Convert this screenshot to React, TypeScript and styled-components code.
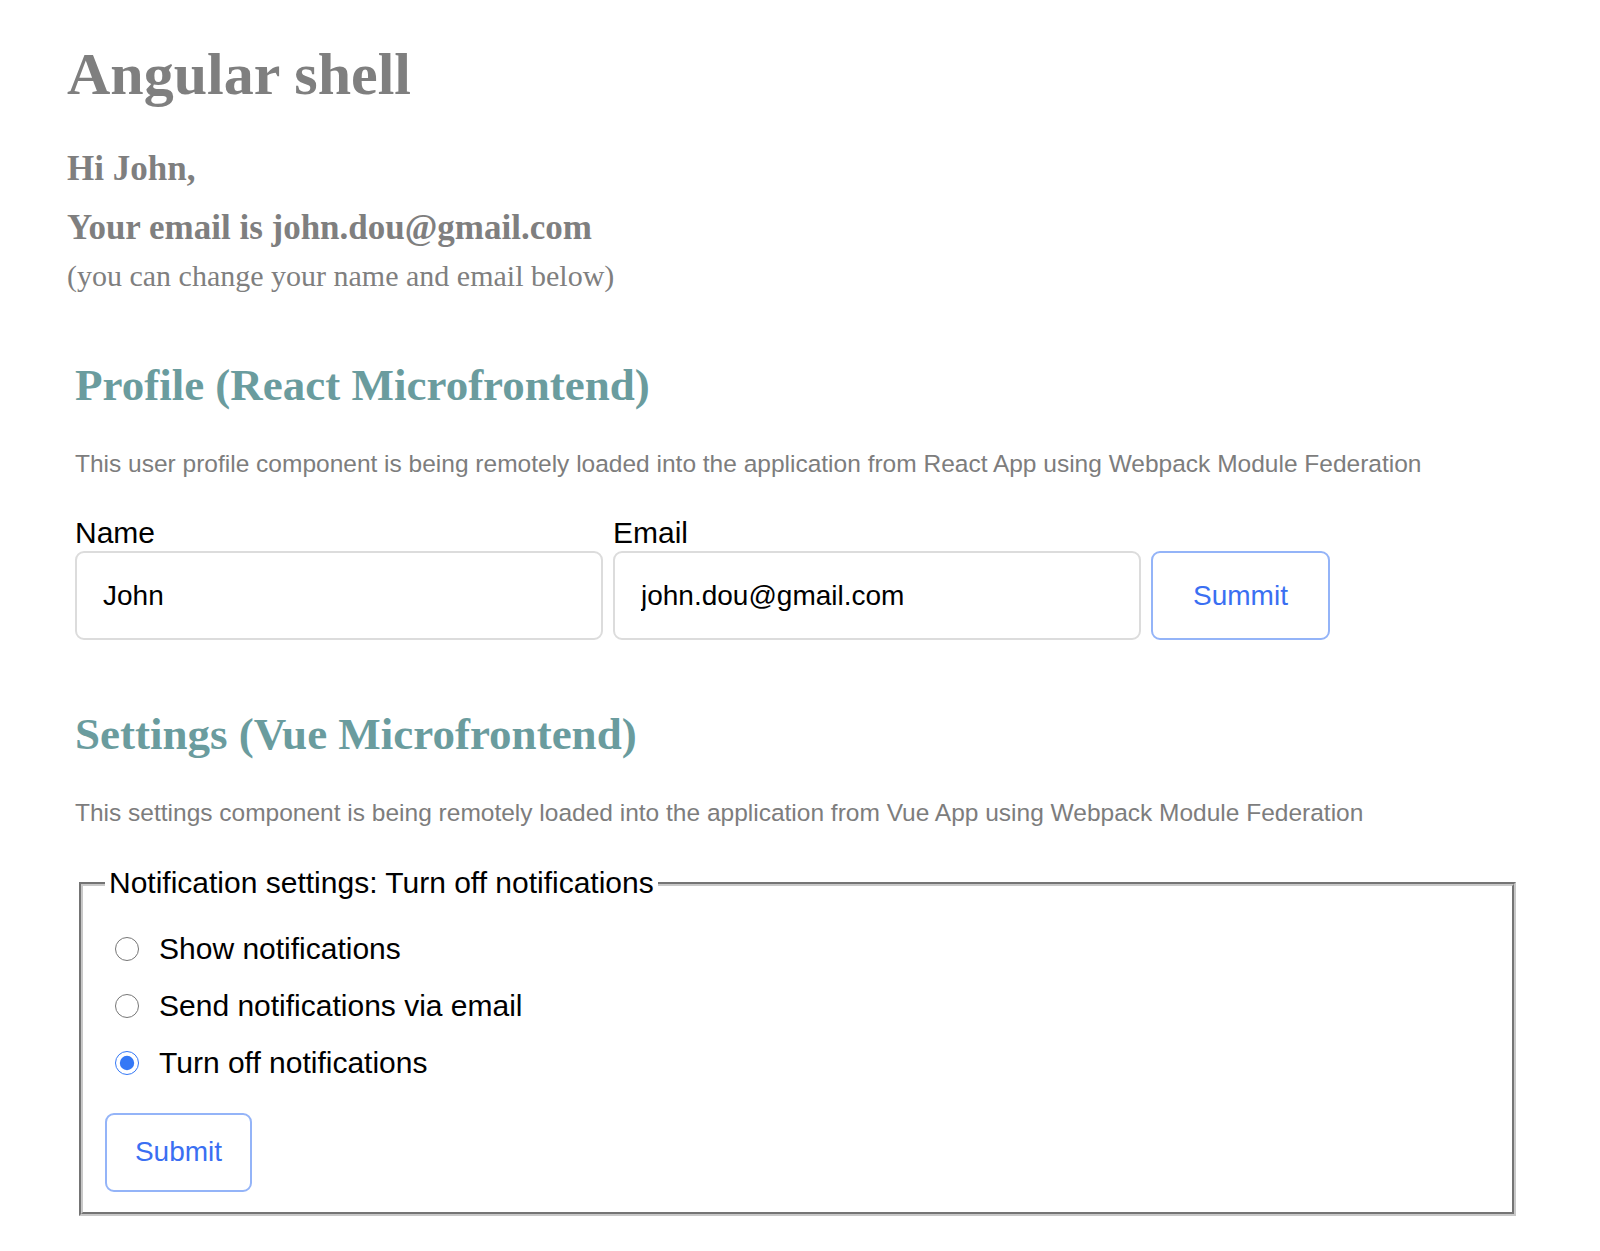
import React, { useState } from "react";
import styled, { createGlobalStyle } from "styled-components";

const GlobalStyle = createGlobalStyle`
  html, body {
    margin: 0;
    padding: 0;
    background: #fff;
  }
`;

const options = [
  { id: "show", label: "Show notifications" },
  { id: "email", label: "Send notifications via email" },
  { id: "off", label: "Turn off notifications" },
];

const App: React.FC = () => {
  const [name, setName] = useState("John");
  const [email, setEmail] = useState("john.dou@gmail.com");
  const [choice, setChoice] = useState("off");
  const current = options.find((o) => o.id === choice);

  return (
    <Shell>
      <GlobalStyle />
      <Title>Angular shell</Title>
      <Greeting>Hi {name},</Greeting>
      <EmailLine>Your email is {email}</EmailLine>
      <Hint>(you can change your name and email below)</Hint>

      <Remote>
        <RemoteTitle>Profile (React Microfrontend)</RemoteTitle>
        <RemoteNote>
          This user profile component is being remotely loaded into the
          application from React App using Webpack Module Federation
        </RemoteNote>
        <ProfileForm onSubmit={(e) => e.preventDefault()}>
          <Field>
            <Label htmlFor="name">Name</Label>
            <Input id="name" value={name} onChange={(e) => setName(e.target.value)} />
          </Field>
          <Field>
            <Label htmlFor="email">Email</Label>
            <Input id="email" value={email} onChange={(e) => setEmail(e.target.value)} />
          </Field>
          <OutlineButton type="submit" $wide>
            Summit
          </OutlineButton>
        </ProfileForm>
      </Remote>

      <Remote $gap={69}>
        <RemoteTitle>Settings (Vue Microfrontend)</RemoteTitle>
        <RemoteNote>
          This settings component is being remotely loaded into the
          application from Vue App using Webpack Module Federation
        </RemoteNote>
        <Settings onSubmit={(e) => e.preventDefault()}>
          <Legend>Notification settings: {current?.label}</Legend>
          <RadioList>
            {options.map((o) => (
              <RadioRow key={o.id}>
                <Radio
                  type="radio"
                  name="notify"
                  checked={choice === o.id}
                  onChange={() => setChoice(o.id)}
                />
                {o.label}
              </RadioRow>
            ))}
          </RadioList>
          <OutlineButton type="submit">Submit</OutlineButton>
        </Settings>
      </Remote>
    </Shell>
  );
};

const Shell = styled.div`
  padding: 40px 80px 40px 67px;
  color: #7f7f7f;
  font-family: "Liberation Serif", "Times New Roman", serif;
`;

const Title = styled.h1`
  margin: 0;
  font-size: 60px;
  line-height: 1.15;
  font-weight: bold;
`;

const Greeting = styled.h3`
  margin: 40px 0 0;
  font-size: 35px;
  line-height: 1.15;
  font-weight: bold;
`;

const EmailLine = styled(Greeting)`
  margin-top: 19px;
`;

const Hint = styled.div`
  margin-top: 10px;
  font-size: 30px;
  line-height: 1.15;
`;

const Remote = styled.section<{ $gap?: number }>`
  margin-top: ${(p) => p.$gap ?? 67}px;
  padding-left: 8px;
`;

const RemoteTitle = styled.h2`
  margin: 0;
  font-size: 45px;
  line-height: 1.15;
  font-weight: bold;
  color: #6a9c9e;
`;

const RemoteNote = styled.p`
  margin: 38px 0 0;
  font-family: "Liberation Sans", Arial, sans-serif;
  font-size: 24.5px;
  line-height: 1.15;
  color: #7d7d7d;
`;

const ProfileForm = styled.form`
  display: flex;
  align-items: flex-end;
  gap: 10px;
  margin-top: 38px;
`;

const Field = styled.div`
  display: flex;
  flex-direction: column;
  gap: 1px;
  width: 528px;
`;

const Label = styled.label`
  font-family: "Liberation Sans", Arial, sans-serif;
  font-size: 30px;
  line-height: 1.15;
  color: #000;
`;

const Input = styled.input`
  box-sizing: border-box;
  height: 89px;
  width: 100%;
  padding: 0 26px;
  border: 2px solid #dcdcdc;
  border-radius: 9px;
  background: #fff;
  font-family: "Liberation Sans", Arial, sans-serif;
  font-size: 28px;
  color: #000;
  outline: none;
`;

const OutlineButton = styled.button<{ $wide?: boolean }>`
  box-sizing: border-box;
  width: ${(p) => (p.$wide ? 179 : 147)}px;
  height: ${(p) => (p.$wide ? 89 : 79)}px;
  border: 2px solid #94b4f8;
  border-radius: 9px;
  background: #fff;
  font-family: "Liberation Sans", Arial, sans-serif;
  font-size: 28px;
  color: #3a6ff2;
  cursor: pointer;
`;

const Settings = styled.fieldset`
  margin: 39px 4px 0;
  padding: 20px 22px 20px;
  border: 4px groove #c8c8c8;
  min-width: 0;
`;

const Legend = styled.legend`
  padding: 0 4px;
  font-family: "Liberation Sans", Arial, sans-serif;
  font-size: 30px;
  line-height: 1.15;
  color: #000;
`;

const RadioList = styled.div`
  display: flex;
  flex-direction: column;
  margin-bottom: 21px;
`;

const RadioRow = styled.label`
  display: flex;
  align-items: center;
  height: 57px;
  font-family: "Liberation Sans", Arial, sans-serif;
  font-size: 30px;
  line-height: 1.15;
  color: #000;
  cursor: pointer;
`;

const Radio = styled.input`
  width: 24px;
  height: 24px;
  margin: 0 20px 0 10px;
  accent-color: #3478f6;
`;

export default App;
